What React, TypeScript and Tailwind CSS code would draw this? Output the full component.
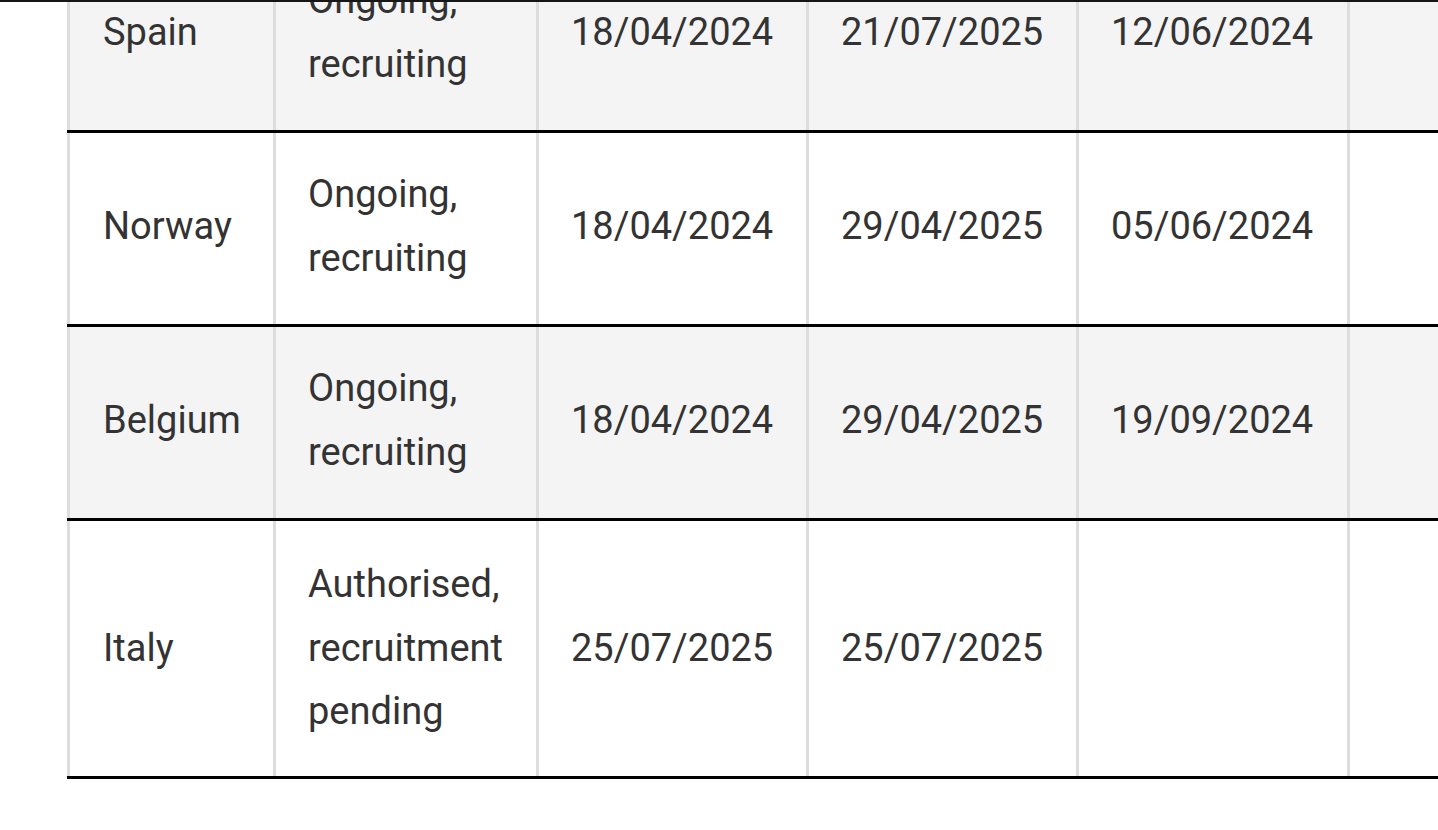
const COLS = ['w-[206px]', 'w-[263px]', 'w-[270px]', 'w-[270px]', 'w-[271px]', 'w-[270px]'];

const ROWS = [
  { country: 'Spain', status: 'Ongoing, recruiting', a: '18/04/2024', b: '21/07/2025', c: '12/06/2024', shade: true, tall: false },
  { country: 'Norway', status: 'Ongoing, recruiting', a: '18/04/2024', b: '29/04/2025', c: '05/06/2024', shade: false, tall: false },
  { country: 'Belgium', status: 'Ongoing, recruiting', a: '18/04/2024', b: '29/04/2025', c: '19/09/2024', shade: true, tall: false },
  { country: 'Italy', status: 'Authorised, recruitment pending', a: '25/07/2025', b: '25/07/2025', c: '', shade: false, tall: true },
];

export default function App() {
  return (
    <div className="relative w-full h-[830px] overflow-hidden bg-white" style={{ fontFamily: 'Roboto, "Liberation Sans", sans-serif' }}>
      {/* header edge */}
      <div className="absolute top-0 left-0 right-0 h-[2px] bg-[#161616] z-10" />

      <div className="pl-[67px] -mt-[61px]">
        <div className="w-max text-[38px] leading-[63.5px] text-[#333333]">
          {ROWS.map((r) => {
            const cells = [r.country, r.status, r.a, r.b, r.c, ''];
            return (
              <div key={r.country}
                className={`flex border-b-[3px] border-black ${r.shade ? 'bg-[#f4f4f4]' : 'bg-white'}`}>
                {cells.map((c, i) => (
                  <div key={i}
                    className={`${COLS[i]} shrink-0 flex items-center border-l-[3px] border-[#dddddd] ${r.tall ? 'py-8' : 'pt-[30px] pb-[34px]'} ${i === 0 ? 'pl-[33px] pr-8' : 'px-8'}`}>
                    <span>{c}</span>
                  </div>
                ))}
              </div>
            );
          })}
        </div>
      </div>
    </div>
  );
}
